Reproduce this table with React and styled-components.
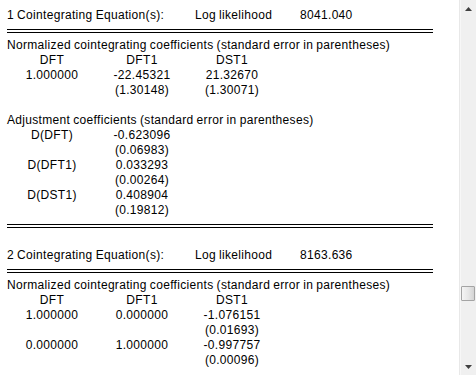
import React from "react";
import styled, { createGlobalStyle } from "styled-components";

const Global = createGlobalStyle`
  html, body { margin: 0; padding: 0; background: #ffffff; }
  body { font-family: "Liberation Sans", Arial, sans-serif; }
`;

const Window = styled.div`
  display: flex;
  width: 476px;
  height: 375px;
  overflow: hidden;
  background: #ffffff;
`;

const Sheet = styled.div`
  flex: 1;
  padding: 8px 0 0 7px;
  overflow: hidden;
  color: #000;
  font-size: 12px;
  letter-spacing: 0.32px;
  word-spacing: -0.6px;
`;

const Row = styled.div`
  display: grid;
  grid-template-columns: ${(p) => p.$cols || "90px 90px 90px"};
  height: 15px;
  line-height: 15px;
  white-space: nowrap;
`;

const Cell = styled.div`
  text-align: ${(p) => p.$align || "center"};
  grid-column: ${(p) => (p.$span ? "1 / -1" : "auto")};
`;

const RuleRow = styled.div`
  height: 15px;
  box-sizing: border-box;
  padding-top: 6px;
`;

const DoubleLine = styled.div`
  width: 426px;
  height: 4px;
  box-sizing: border-box;
  border-top: 1px solid #000;
  border-bottom: 1px solid #000;
`;

const Scrollbar = styled.div`
  width: 16px;
  flex: none;
  display: flex;
  flex-direction: column;
  background: #f0f0f0;
  border-left: 1px solid #e8e8e8;
  box-shadow: inset 1px 0 0 #f7f7f7;
`;

const Arrow = styled.div`
  height: 17px;
  display: flex;
  align-items: center;
  justify-content: center;
  flex: none;
`;

const Track = styled.div`
  flex: 1;
  display: flex;
  flex-direction: column;
`;

const Thumb = styled.div`
  margin: ${(p) => p.$top}px 1px 0 1px;
  height: 15px;
  box-sizing: border-box;
  border: 1px solid #a4a4a4;
  border-radius: 1px;
  background: linear-gradient(to right, #f4f4f4 0%, #e6e6e6 55%, #d4d4d4 100%);
`;

const ArrowGlyph = ({ down }) => (
  <svg width="7" height="4" viewBox="0 0 7 4">
    {down ? (
      <path d="M0 0 H7 L3.5 4 Z" fill="#404040" />
    ) : (
      <path d="M3.5 0 L7 4 H0 Z" fill="#404040" />
    )}
  </svg>
);

const Header = ({ n, value }) => (
  <Row $cols="188px 105px 120px">
    <Cell $align="left">{n} Cointegrating Equation(s):</Cell>
    <Cell $align="left">Log likelihood</Cell>
    <Cell $align="left">{value}</Cell>
  </Row>
);

const Caption = ({ children }) => (
  <Row>
    <Cell $span $align="left">{children}</Cell>
  </Row>
);

const Values = ({ cells }) => (
  <Row>
    {cells.map((c, i) => (
      <Cell key={i}>{c}</Cell>
    ))}
  </Row>
);

const Rule = () => (
  <RuleRow>
    <DoubleLine />
  </RuleRow>
);

const Blank = () => <Row />;

export default function App() {
  return (
    <>
      <Global />
      <Window>
        <Sheet>
          <Header n={1} value="8041.040" />
          <Rule />
          <Caption>Normalized cointegrating coefficients (standard error in parentheses)</Caption>
          <Values cells={["DFT", "DFT1", "DST1"]} />
          <Values cells={["1.000000", "-22.45321", "21.32670"]} />
          <Values cells={["", "(1.30148)", "(1.30071)"]} />
          <Blank />
          <Caption>Adjustment coefficients (standard error in parentheses)</Caption>
          <Values cells={["D(DFT)", "-0.623096"]} />
          <Values cells={["", "(0.06983)"]} />
          <Values cells={["D(DFT1)", "0.033293"]} />
          <Values cells={["", "(0.00264)"]} />
          <Values cells={["D(DST1)", "0.408904"]} />
          <Values cells={["", "(0.19812)"]} />
          <Rule />
          <Blank />
          <Header n={2} value="8163.636" />
          <Rule />
          <Caption>Normalized cointegrating coefficients (standard error in parentheses)</Caption>
          <Values cells={["DFT", "DFT1", "DST1"]} />
          <Values cells={["1.000000", "0.000000", "-1.076151"]} />
          <Values cells={["", "", "(0.01693)"]} />
          <Values cells={["0.000000", "1.000000", "-0.997757"]} />
          <Values cells={["", "", "(0.00096)"]} />
        </Sheet>
        <Scrollbar>
          <Arrow>
            <ArrowGlyph />
          </Arrow>
          <Track>
            <Thumb $top={269} />
          </Track>
          <Arrow>
            <ArrowGlyph down />
          </Arrow>
        </Scrollbar>
      </Window>
    </>
  );
}
